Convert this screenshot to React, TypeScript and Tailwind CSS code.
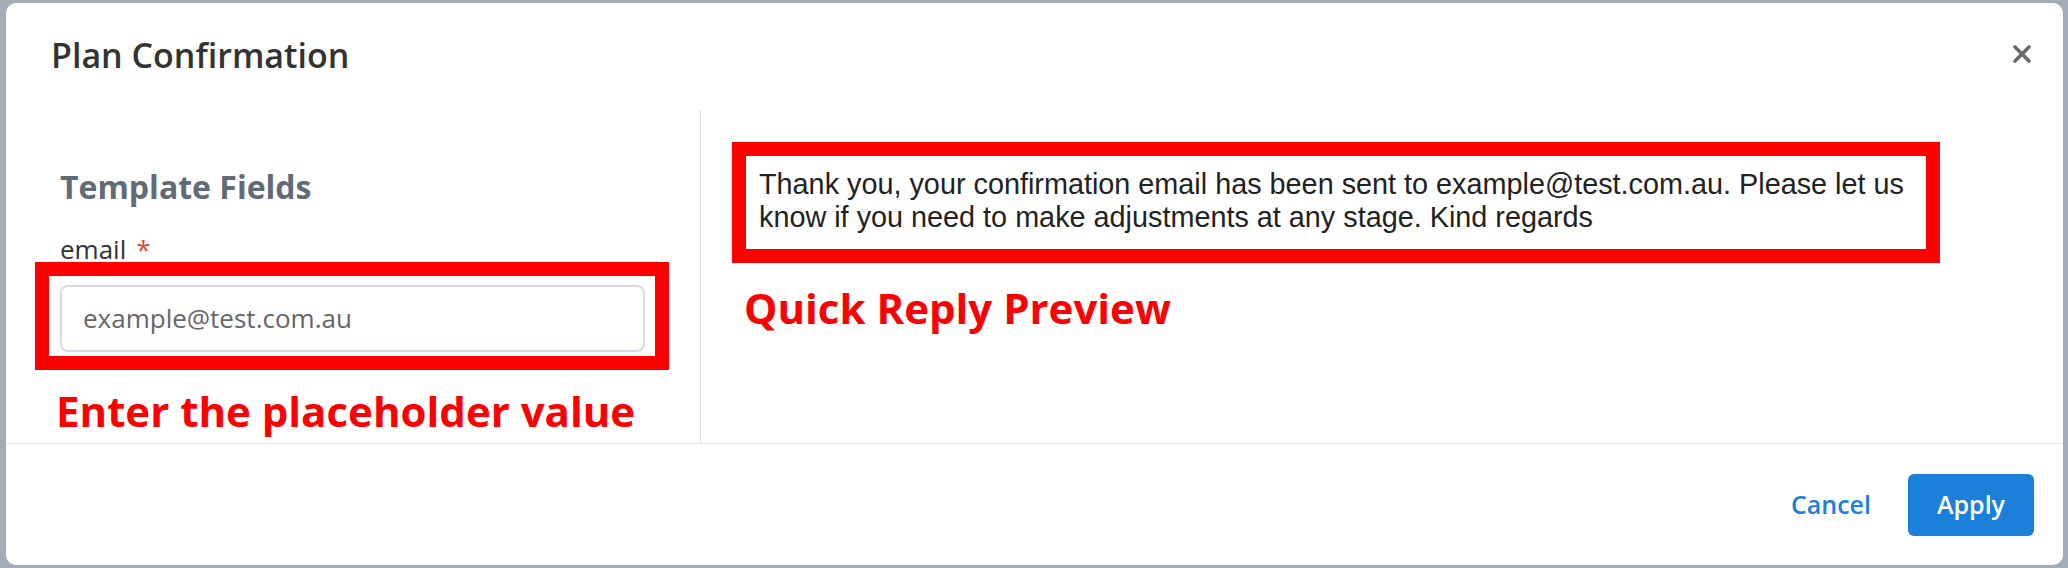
import React from "react";

export default function App() {
  return (
    <div
      className="w-[2068px] h-[568px] bg-[#a3adb7] pt-[3px] pl-[6px] pr-[5px] pb-[3px] overflow-hidden"
      style={{ fontFamily: "'Open Sans', 'Noto Sans', sans-serif" }}
    >
      <div className="h-full bg-white rounded-[10px] flex flex-col overflow-hidden">
        {/* Header */}
        <div className="h-[107px] shrink-0 flex items-start justify-between pl-[45px] pr-[32px] pt-[29px]">
          <h2 className="text-[34px] leading-[46px] font-semibold text-[#333]">Plan Confirmation</h2>
          <button className="mt-[13px] w-[18px] h-[18px] flex items-center justify-center">
            <svg width="18" height="18" viewBox="0 0 18 18">
              <path d="M2 2 L16 16 M16 2 L2 16" stroke="#6b6b6b" strokeWidth="3.6" strokeLinecap="round" />
            </svg>
          </button>
        </div>

        {/* Body */}
        <div className="flex flex-1 min-h-0">
          <div className="w-[695px] shrink-0 border-r border-[#dcdcdc] pl-[54px] pt-[55px] flex flex-col items-start">
            <div className="text-[32px] leading-[44px] font-bold text-[#5f6b77]">Template Fields</div>
            <div className="mt-[22px] text-[26px] leading-[36px] text-[#333] flex items-start">
              <span>email</span>
              <span className="ml-[10px] text-[#e0472c]">*</span>
            </div>
            <div className="-ml-[25px] -mt-[5px] w-[634px] border-[14px] border-[#ff0000] pl-[11px] pr-[10px] pt-[9px] pb-[4px]">
              <div className="h-[67px] rounded-[8px] border-2 border-[#d5dbe1] flex items-center pl-[21px] text-[26px] text-[#666]">
                example@test.com.au
              </div>
            </div>
            <div className="-ml-[4px] mt-[16px] text-[42px] leading-[50px] font-bold text-[#ff0000] whitespace-nowrap">
              Enter the placeholder value
            </div>
          </div>

          <div className="flex-1 pl-[31px] pt-[32px] flex flex-col items-start">
            <div className="w-[1208px] border-[14px] border-[#ff0000] pl-[13px] pt-[12px] pb-[15px]">
              <p
                className="text-[28.8px] leading-[33px] text-[#222] whitespace-nowrap"
                style={{ fontFamily: "'Liberation Sans', Arial, sans-serif" }}
              >
                Thank you, your confirmation email has been sent to example@test.com.au. Please let us
                <br />
                know if you need to make adjustments at any stage. Kind regards
              </p>
            </div>
            <div className="ml-[12px] mt-[20px] text-[42px] leading-[50px] font-bold text-[#ff0000] whitespace-nowrap">
              Quick Reply Preview
            </div>
          </div>
        </div>

        {/* Footer */}
        <div className="h-[122px] shrink-0 border-t border-[#e6e6e6] flex items-center justify-end pr-[29px]">
          <button className="text-[25px] font-semibold text-[#1a80d9] mr-[37px]">Cancel</button>
          <button className="w-[126px] h-[62px] rounded-[6px] bg-[#1a80d9] text-white text-[25px] font-semibold">
            Apply
          </button>
        </div>
      </div>
    </div>
  );
}
